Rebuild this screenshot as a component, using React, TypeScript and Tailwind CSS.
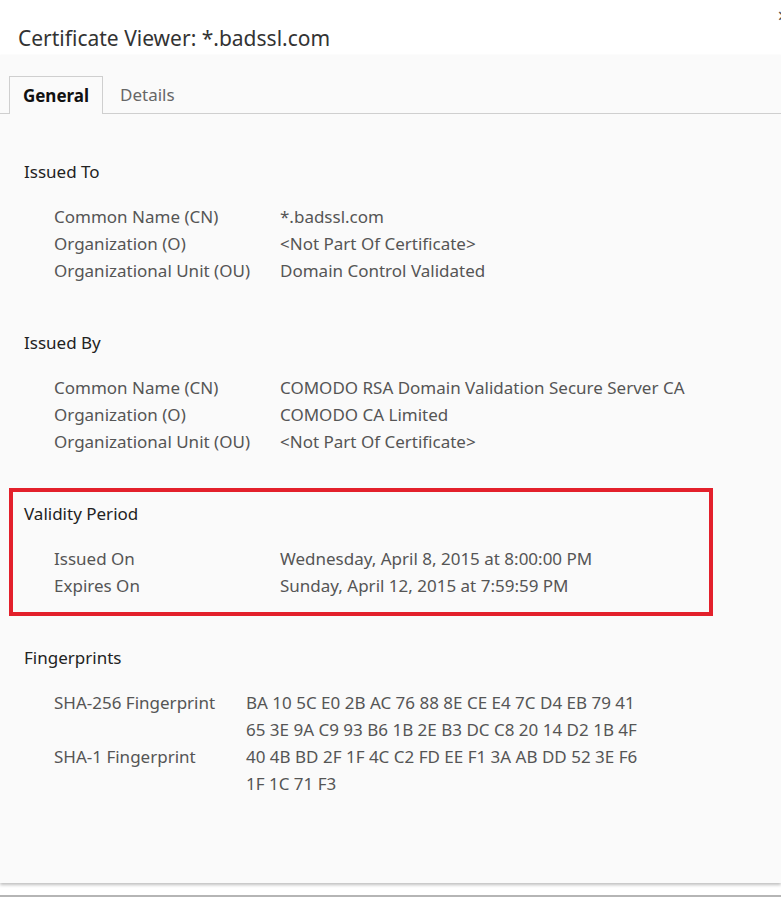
import React from "react";

type Row = { label: string; value: string[] };

function Section({ title, rows, valueCol = 226 }: { title: string; rows: Row[]; valueCol?: number }) {
  return (
    <div>
      <div className="h-[27px] leading-[27px] text-[#222]">{title}</div>
      <div className="mt-[18px] pl-[30px]">
        {rows.map((r) => (
          <div key={r.label} className="flex">
            <div className="shrink-0 text-[#555] leading-[27px]" style={{ width: valueCol }}>
              {r.label}
            </div>
            <div className="text-[#555] leading-[27px]">
              {r.value.map((v, i) => (
                <div key={i} className="whitespace-nowrap">{v}</div>
              ))}
            </div>
          </div>
        ))}
      </div>
    </div>
  );
}

export default function App() {
  return (
    <div
      className="relative w-[781px] h-[897px] bg-white overflow-hidden text-[17px]"
      style={{ fontFamily: '"Noto Sans", "Open Sans", sans-serif' }}
    >
      <div className="h-[55px] bg-white flex items-end pl-[18px] pb-[2px]">
        <span className="text-[21px] text-[#333] leading-[30px]">Certificate Viewer: *.badssl.com</span>
      </div>
      <div className="absolute right-[-8px] top-[6px] text-[20px] text-[#555] leading-none">×</div>
      <div className="h-[828px] bg-[#fafafa] shadow-[0_2px_3px_rgba(0,0,0,0.25)] relative">
        <div className="pt-[21px] border-b border-[#cfcfcf] flex items-end">
          <div className="ml-[9px] w-[94px] h-[38px] border border-b-0 border-[#cfcfcf] bg-[#fafafa] -mb-px flex items-center justify-center font-bold text-[#111] text-[17px]">
            General
          </div>
          <div className="ml-[17px] h-[37px] flex items-center text-[#666] text-[17px]">Details</div>
        </div>
        <div className="pl-[24px] pt-[44px]">
          <Section
            title="Issued To"
            rows={[
              { label: "Common Name (CN)", value: ["*.badssl.com"] },
              { label: "Organization (O)", value: ["<Not Part Of Certificate>"] },
              { label: "Organizational Unit (OU)", value: ["Domain Control Validated"] },
            ]}
          />
          <div className="h-[45px]" />
          <Section
            title="Issued By"
            rows={[
              { label: "Common Name (CN)", value: ["COMODO RSA Domain Validation Secure Server CA"] },
              { label: "Organization (O)", value: ["COMODO CA Limited"] },
              { label: "Organizational Unit (OU)", value: ["<Not Part Of Certificate>"] },
            ]}
          />
          <div className="h-[33px]" />
          <div className="-ml-[15px] w-[704px] border-4 border-[#e3202b] pl-[11px] pt-[8px] pb-[13px]">
            <Section
              title="Validity Period"
              rows={[
                { label: "Issued On", value: ["Wednesday, April 8, 2015 at 8:00:00 PM"] },
                { label: "Expires On", value: ["Sunday, April 12, 2015 at 7:59:59 PM"] },
              ]}
            />
          </div>
          <div className="h-[28px]" />
          <Section
            title="Fingerprints"
            valueCol={192}
            rows={[
              {
                label: "SHA-256 Fingerprint",
                value: [
                  "BA 10 5C E0 2B AC 76 88 8E CE E4 7C D4 EB 79 41",
                  "65 3E 9A C9 93 B6 1B 2E B3 DC C8 20 14 D2 1B 4F",
                ],
              },
              {
                label: "SHA-1 Fingerprint",
                value: ["40 4B BD 2F 1F 4C C2 FD EE F1 3A AB DD 52 3E F6", "1F 1C 71 F3"],
              },
            ]}
          />
        </div>
      </div>
      <div className="absolute left-0 right-0 top-[895px] h-[2px] bg-[#b5b5b5]" />
    </div>
  );
}
